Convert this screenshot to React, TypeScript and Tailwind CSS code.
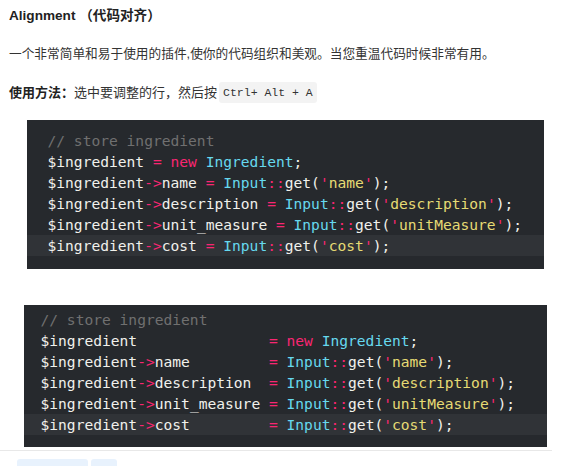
import React from "react";

type Tok = [string, string];

const W = "text-[#f1f1ec]";
const P = "text-[#f92672]";
const C = "text-[#66d9ef]";
const Y = "text-[#e6db74]";

const lines1: Tok[][] = [
  [["$ingredient", W], [" = ", P], ["new", P], [" Ingredient", C], [";", W]],
  [["$ingredient", W], ["->", P], ["name", W], [" = ", P], ["Input", C], ["::", P], ["get(", W], ["'", P], ["name", Y], ["'", P], [");", W]],
  [["$ingredient", W], ["->", P], ["description", W], [" = ", P], ["Input", C], ["::", P], ["get(", W], ["'", P], ["description", Y], ["'", P], [");", W]],
  [["$ingredient", W], ["->", P], ["unit_measure", W], [" = ", P], ["Input", C], ["::", P], ["get(", W], ["'", P], ["unitMeasure", Y], ["'", P], [");", W]],
  [["$ingredient", W], ["->", P], ["cost", W], [" = ", P], ["Input", C], ["::", P], ["get(", W], ["'", P], ["cost", Y], ["'", P], [");", W]],
];

const lines2: Tok[][] = [
  [["$ingredient               ", W], ["= ", P], ["new", P], [" Ingredient", C], [";", W]],
  [["$ingredient", W], ["->", P], ["name         ", W], ["= ", P], ["Input", C], ["::", P], ["get(", W], ["'", P], ["name", Y], ["'", P], [");", W]],
  [["$ingredient", W], ["->", P], ["description  ", W], ["= ", P], ["Input", C], ["::", P], ["get(", W], ["'", P], ["description", Y], ["'", P], [");", W]],
  [["$ingredient", W], ["->", P], ["unit_measure ", W], ["= ", P], ["Input", C], ["::", P], ["get(", W], ["'", P], ["unitMeasure", Y], ["'", P], [");", W]],
  [["$ingredient", W], ["->", P], ["cost         ", W], ["= ", P], ["Input", C], ["::", P], ["get(", W], ["'", P], ["cost", Y], ["'", P], [");", W]],
];

const CodeShot = ({ lines, wrap, pad }: { lines: Tok[][]; wrap: string; pad: string }) => (
  <div className={`mx-auto bg-[#26292d] text-[14.6px] ${wrap}`} style={{ fontFamily: "'DejaVu Sans Mono', monospace" }}>
    <div className={`h-[21px] leading-[21px] whitespace-pre text-[#707070] ${pad}`}>// store ingredient</div>
    {lines.map((l, i) => (
      <div
        key={i}
        className={`h-[21px] leading-[21px] whitespace-pre ${pad} ${i === lines.length - 1 ? "bg-[#303337]" : ""}`}
      >
        {l.map(([t, c], j) => (
          <span key={j} className={c}>
            {t}
          </span>
        ))}
      </div>
    ))}
  </div>
);

export default function App() {
  return (
    <div
      className="w-[561px] h-[466px] overflow-hidden bg-white text-[#222]"
      style={{ fontFamily: "'Liberation Sans', 'Noto Sans CJK SC', sans-serif" }}
    >
      <div className="pl-[9px] pt-[6px]">
        <h1 className="text-[13.6px] font-bold leading-[20px]">Alignment （代码对齐）</h1>
        <p className="mt-[18px] text-[12.7px] leading-[20px] text-[#333]">
          一个非常简单和易于使用的插件,使你的代码组织和美观。当您重温代码时候非常有用。
        </p>
        <p className="mt-[18px] text-[13px] leading-[21px] text-[#333] flex items-center">
          <b className="text-[#222]">使用方法：</b>
          <span>选中要调整的行，然后按</span>
          <code
            className="ml-[2px] px-[4px] h-[21px] leading-[21px] rounded-[3px] bg-[#f3f3f3] text-[11.5px] text-[#333]"
            style={{ fontFamily: "'Liberation Mono', monospace" }}
          >
            Ctrl+ Alt + A
          </code>
        </p>
        <div className="mt-[17px]">
          <CodeShot lines={lines1} wrap="w-[517px] pt-[10px] pb-[13px]" pad="pl-[21px]" />
        </div>
        <div className="mt-[36px]">
          <CodeShot lines={lines2} wrap="w-[523px] pt-[4px] pb-[12px]" pad="pl-[17px]" />
        </div>
      </div>
      <div className="mt-[3px] w-[552px] h-px bg-[#e8e8e8]" />
      <div className="mt-[8px] flex gap-[3px] pl-[17px]">
        <div className="w-[71px] h-[10px] rounded-t-[3px] bg-[#e8f2fd]" />
        <div className="w-[26px] h-[10px] rounded-t-[3px] bg-[#e8f2fd]" />
      </div>
    </div>
  );
}
